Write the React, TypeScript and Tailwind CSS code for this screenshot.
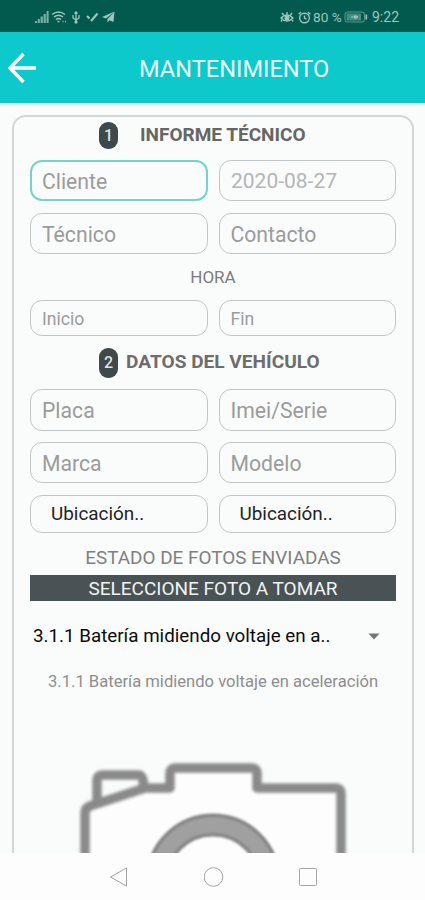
import type { ReactNode } from "react";
import clsx from "clsx";

function StatusBar() {
  return (
    <div className="flex h-8 shrink-0 items-center bg-[#02594d] pr-[25px] pl-[35px] text-[#9cc7c0]">
      <div className="flex items-center pt-0.5">
        <svg width="14" height="12" viewBox="0 0 14 12" fill="currentColor">
          <path d="M0 10h2v2H0zM2.8 8h2v4h-2zM5.6 5.5h2.2V12H5.6zM8.6 3h2.2v9H8.6zM11.6 0h2v12h-2z" opacity="0.8" />
        </svg>
        <svg width="16" height="12" viewBox="0 0 16 12" fill="none" stroke="currentColor" strokeWidth="1.5" className="ml-0.5">
          <path d="M1 3.5q6.5-5 13 0M3 6q4.5-3.5 9 0M5 8.5q2.5-2 5 0" />
          <path d="M6.5 10.5h2M11.5 10.5h1M14 10.5h1" />
        </svg>
        <svg width="10" height="13" viewBox="0 0 10 13" fill="none" stroke="currentColor" strokeWidth="1.3" className="ml-1">
          <path d="M5 1v10M2 4v3l3 2 3-2V4M3.5 2.5L5 1l1.5 1.5" />
          <circle cx="5" cy="11" r="1" fill="currentColor" />
        </svg>
        <svg width="13" height="11" viewBox="0 0 13 11" fill="none" stroke="currentColor" strokeWidth="2.2" className="ml-[5px]">
          <path d="M1 4l2.5 2.5M5 9l6.5-7.5" />
        </svg>
        <svg width="13" height="12" viewBox="0 0 13 12" fill="currentColor" className="ml-[3px]">
          <path d="M12.5 0.5L0 6l4 1.5zM12.5 0.5L5.5 8v3.5l2-2.2 4 1.7z" />
        </svg>
      </div>
      <div className="ml-auto flex items-center pt-0.5">
        <svg width="14" height="12" viewBox="0 0 14 12" fill="none" stroke="currentColor" strokeWidth="1.4">
          <path d="M1 7q6-6 12 0q-6 6-12 0zM7 3.5V1M3.5 4L2 2M10.5 4L12 2M2 9L1 10.5M12 9l1 1.5" />
          <circle cx="7" cy="7" r="1.8" fill="currentColor" />
        </svg>
        <svg width="13" height="13" viewBox="0 0 13 13" fill="none" stroke="currentColor" strokeWidth="1.4" className="ml-1">
          <circle cx="6.5" cy="7" r="4.8" />
          <path d="M6.5 4.5V7l2 1.2M0.6 3.2L3.2 1M12.4 3.2L9.8 1" />
        </svg>
        <span className="ml-0.5 w-7 text-[13.6px] leading-4 whitespace-nowrap">80 %</span>
        <svg width="24" height="12" viewBox="0 0 24 12" fill="none" stroke="currentColor" className="ml-[3px]">
          <rect x="1" y="1" width="19.5" height="10" rx="2.5" opacity="0.6" />
          <path d="M22.3 3.5v5" strokeWidth="1.6" />
          <rect x="2.5" y="2.5" width="14.5" height="7" fill="currentColor" stroke="none" opacity="0.45" />
          <path d="M7 6h3l1-1.5L14 6l-3 1.5L10 6" fill="currentColor" />
        </svg>
        <span className="ml-1 w-7 text-[14px] leading-4">9:22</span>
      </div>
    </div>
  );
}

function Header() {
  return (
    <header className="flex h-[71px] shrink-0 items-center bg-[#0dc9cb] pl-2 text-white">
      <svg width="29" height="32" viewBox="0 0 29 32" fill="none" stroke="currentColor" strokeWidth="3.4">
        <path d="M28 16H2.5M15.5 2L2 16l13.5 14" />
      </svg>
      <h1 className="ml-[102px] pt-[3px] text-[23.6px] leading-7 text-[#e8fdfb]">MANTENIMIENTO</h1>
    </header>
  );
}

function Badge({ children, className }: { children: ReactNode; className?: string }) {
  return (
    <span
      className={clsx(
        "flex w-[19px] items-center justify-center rounded-[9px] bg-[#3f484b] text-[16px] leading-none font-medium text-[#dde4e5]",
        className
      )}
    >
      {children}
    </span>
  );
}

type FieldProps = {
  label: string;
  className?: string;
};

function Field({ label, className }: FieldProps) {
  return (
    <div
      className={clsx(
        "flex flex-1 items-center rounded-[12px]",
        className ?? "h-[41px] border border-[#c3c6c6] pt-0.5 pl-[11px] text-[21.2px] text-[#9b9b9b]"
      )}
    >
      {label}
    </div>
  );
}

const timeField = "h-9 border border-[#c3c6c6] pt-0.5 pl-[11px] text-[17.6px] text-[#9b9b9b]";
const plateField = "h-[42px] border border-[#c3c6c6] pt-0.5 pl-[11px] text-[21.2px] text-[#9b9b9b]";
const locationField = "h-[38px] border border-[#c3c6c6] pt-px pl-5 text-[18.9px] text-[#242424]";

function Camera() {
  return (
    <svg width="366" height="200" viewBox="30 750 366 200" className="shrink-0" fill="none">
      <path
        d="M85 950V813q0-5 5-7l55-18h25v-15q0-5 5-5h77q5 0 5 5v15h79q5 0 5 5v157z"
        fill="#fdfdfd"
      />
      <g stroke="#8a8a8a" strokeWidth="9.5" strokeLinejoin="round" className="blur-[1.8px]">
        <path d="M85 950V813q0-5 5-7l55-18h25v-15q0-5 5-5h77q5 0 5 5v15h79q5 0 5 5v157" />
        <path d="M97 803v-23q0-5 5-5h36q4 0 5 5l1 8" />
      </g>
      <g className="blur-[1px]">
        <circle cx="213" cy="881" r="56" stroke="#868686" strokeWidth="23" />
        <circle cx="213" cy="881" r="56" stroke="#a0a0a0" strokeWidth="16" />
      </g>
    </svg>
  );
}

function NavBar() {
  return (
    <nav className="flex h-[47px] shrink-0 items-center gap-[75px] bg-[#fdfdfd] pl-[109px] text-[#a3a3a3]">
      <svg width="20" height="20" viewBox="0 0 20 20" fill="none" stroke="currentColor" strokeLinejoin="round">
        <path d="M17.5 1v18L1.5 10z" />
      </svg>
      <svg width="20" height="20" viewBox="0 0 20 20" fill="none" stroke="currentColor">
        <circle cx="9.5" cy="10" r="9.3" />
      </svg>
      <svg width="20" height="20" viewBox="0 0 20 20" fill="none" stroke="currentColor">
        <rect x="0.5" y="1.5" width="17" height="17" rx="1" />
      </svg>
    </nav>
  );
}

export default function App() {
  return (
    <div className="flex h-[900px] w-[425px] flex-col overflow-hidden bg-[#fafbfb] font-[Roboto,sans-serif]">
      <StatusBar />
      <Header />
      <main className="min-h-0 flex-1 overflow-hidden pt-3 pr-[11px] pl-3">
        <section className="flex h-[860px] flex-col rounded-[14px] border-2 border-[#d4d7d7] px-4">
          <div className="flex h-[37px] items-center pl-[69px]">
            <Badge className="h-[27px]">1</Badge>
            <h2 className="ml-[22px] text-[19px] font-bold text-[#666]">INFORME TÉCNICO</h2>
          </div>
          <div className="mt-1.5 flex gap-[11px]">
            <Field label="Cliente" className="h-[41px] border-2 border-[#74d3cb] pt-[3px] pl-2.5 text-[21.2px] text-[#9b9b9b]" />
            <Field label="2020-08-27" className="h-[41px] border border-[#c3c6c6] pt-[3px] pl-[11px] text-[21px] text-[#b5b5b5]" />
          </div>
          <div className="mt-3 flex gap-[11px]">
            <Field label="Técnico" />
            <Field label="Contacto" />
          </div>
          <p className="flex h-[46px] items-center justify-center pt-0.5 text-[17px] text-[#7c7c7c]">HORA</p>
          <div className="flex gap-[11px]">
            <Field label="Inicio" className={timeField} />
            <Field label="Fin" className={timeField} />
          </div>
          <div className="flex h-[53px] items-center pl-[69px]">
            <Badge className="h-[30px]">2</Badge>
            <h2 className="ml-2 text-[19.1px] font-bold text-[#6d6d6d]">DATOS DEL VEHÍCULO</h2>
          </div>
          <div className="flex gap-[11px]">
            <Field label="Placa" className={plateField} />
            <Field label="Imei/Serie" className={plateField} />
          </div>
          <div className="mt-[11px] flex gap-[11px]">
            <Field label="Marca" />
            <Field label="Modelo" />
          </div>
          <div className="mt-3 flex gap-[11px]">
            <Field label="Ubicación.." className={locationField} />
            <Field label="Ubicación.." className={locationField} />
          </div>
          <p className="flex h-[42px] items-center justify-center pt-2 text-[18.9px] text-[#808080]">
            ESTADO DE FOTOS ENVIADAS
          </p>
          <div className="flex h-[26px] items-center justify-center bg-[#495255] pt-0.5 text-[19px] text-[#f0f4f4]">
            SELECCIONE FOTO A TOMAR
          </div>
          <div className="flex h-[68px] items-center pt-0.5 pr-4 pl-[3px] text-[18.8px] text-[#0c0c0c]">
            <span className="whitespace-nowrap">3.1.1 Batería midiendo voltaje en a..</span>
            <svg width="12" height="7" viewBox="0 0 12 7" className="ml-auto fill-[#747474]">
              <path d="M0.5 0.5h11L6 6.5z" />
            </svg>
          </div>
          <p className="flex h-6 items-center pt-0.5 pl-[18px] text-[16.6px] whitespace-nowrap text-[#8e8e8e]">
            3.1.1 Batería midiendo voltaje en aceleración
          </p>
          <div className="mt-[57px]">
            <Camera />
          </div>
        </section>
      </main>
      <NavBar />
    </div>
  );
}
